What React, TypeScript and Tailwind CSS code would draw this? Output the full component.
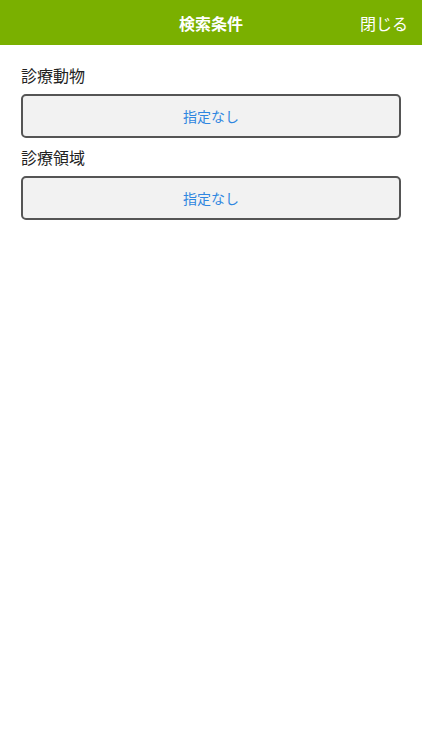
import React from "react"

const font = { fontFamily: '"Noto Sans CJK JP", "Noto Sans", sans-serif' }

function Field({ label }: { label: string }) {
  return (
    <div>
      <div className="text-[16px] leading-[24px] text-[#222] mb-[7px]">{label}</div>
      <button className="w-full h-[44px] rounded-[5px] border-2 border-[#555] bg-[#f2f2f2] text-[14px] text-[#2f86e0]">
        指定なし
      </button>
    </div>
  )
}

export default function App() {
  return (
    <main className="min-h-screen bg-white" style={font}>
      {/* Header */}
      <header className="relative h-[45px] bg-[#7ab000] flex items-center justify-center">
        <h1 className="text-[16px] font-bold text-white">検索条件</h1>
        <button className="absolute right-[14px] top-0 h-[45px] text-[16px] text-white">閉じる</button>
      </header>

      {/* Conditions */}
      <section className="px-[21px] pt-[18px] flex flex-col gap-[7px]">
        <Field label="診療動物" />
        <Field label="診療領域" />
      </section>
    </main>
  )
}
